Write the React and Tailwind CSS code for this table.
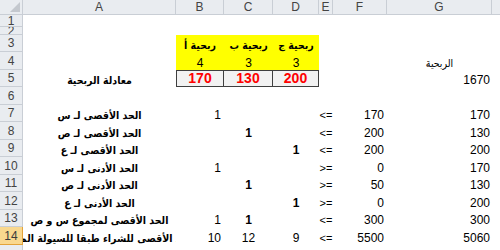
import React from "react";

const colW = ["w-[153px]", "w-[48px]", "w-[49px]", "w-[46px]", "w-[14px]", "w-[54px]", "w-[105px]"];
const letters = ["A", "B", "C", "D", "E", "F", "G"];

// one entry per sheet row: [label, B, C, D, sign, F, G]
const constraints = [
  { n: 7, h: "h-[17px]", a: "الحد الأقصى لـ س", b: "1", c: "", d: "", e: "<=", f: "170", g: "170" },
  { n: 8, h: "h-[18px]", a: "الحد الأقصى لـ ص", b: "", c: "1", d: "", e: "<=", f: "200", g: "130" },
  { n: 9, h: "h-[17px]", a: "الحد الأقصى لـ ع", b: "", c: "", d: "1", e: "<=", f: "200", g: "200" },
  { n: 10, h: "h-[18px]", a: "الحد الأدنى لـ س", b: "1", c: "", d: "", e: ">=", f: "0", g: "170" },
  { n: 11, h: "h-[17px]", a: "الحد الأدنى لـ ص", b: "", c: "1", d: "", e: ">=", f: "50", g: "130" },
  { n: 12, h: "h-[18px]", a: "الحد الأدنى لـ ع", b: "", c: "", d: "1", e: ">=", f: "0", g: "200" },
  { n: 13, h: "h-[17px]", a: "الحد الأقصى لمجموع س و ص", b: "1", c: "1", d: "", e: "<=", f: "300", g: "300" },
  { n: 14, h: "h-[18px]", a: "الحد الأقصى للشراء طبقا للسيولة المالية", b: "10", c: "12", d: "9", e: "<=", f: "5500", g: "5060", sel: true, plain: true },
];

function RowHead({ n, sel }) {
  return (
    <div
      className={`flex w-[23px] shrink-0 items-center justify-center overflow-hidden border-r border-b text-[12px] ${
        sel ? "border-[#e2a33a] bg-[#f9d88f] text-[#3b3b3b]" : "border-[#c9ced5] bg-[#e9ecf0] text-[#444]"
      }`}
    >
      {n}
    </div>
  );
}

function Cell({ i, className = "", children }) {
  return <div className={`flex shrink-0 items-end overflow-hidden leading-none ${colW[i]} ${className}`}>{children}</div>;
}

function Arabic({ children, bold = true }) {
  return (
    <span
      dir="rtl"
      className={`whitespace-nowrap pb-[2px] text-[10.5px] [font-family:'DejaVu_Sans_Condensed','DejaVu_Sans',sans-serif] [font-stretch:condensed] ${
        bold ? "font-bold" : ""
      }`}
    >
      {children}
    </span>
  );
}

export default function App() {
  return (
    <div className="h-[250px] w-[500px] overflow-hidden bg-white text-[12px] text-black [font-family:'Liberation_Sans','DejaVu_Sans',sans-serif]">
      {/* column letters */}
      <div className="flex h-[15px]">
        <div className="relative w-[23px] shrink-0 border-r border-b border-[#c9ced5] bg-[#e9ecf0]">
          <svg className="absolute right-[2px] bottom-[2px]" width="10" height="10" viewBox="0 0 10 10">
            <path d="M10 0 L10 10 L0 10 Z" fill="#c4c8ce" />
          </svg>
        </div>
        {letters.map((l, i) => (
          <div
            key={l}
            className={`flex shrink-0 items-center justify-center border-r border-b border-[#c9ced5] bg-[#e9ecf0] text-[12px] text-[#444] ${colW[i]}`}
          >
            {l}
          </div>
        ))}
        <div className="flex-1 border-b border-[#c9ced5] bg-[#e9ecf0]" />
      </div>

      <div className="flex h-[12px]">
        <RowHead n={1} />
      </div>
      <div className="flex h-[8px]">
        <RowHead n={2} />
      </div>

      {/* row 3: product names */}
      <div className="flex h-[17px]">
        <RowHead n={3} />
        <Cell i={0} />
        {["ربحية أ", "ربحية ب", "ربحية ج"].map((t, k) => (
          <Cell key={t} i={k + 1} className="justify-center bg-[#ffff00]">
            <Arabic>{t}</Arabic>
          </Cell>
        ))}
      </div>

      {/* row 4: unit profit */}
      <div className="flex h-[18px]">
        <RowHead n={4} />
        <Cell i={0} />
        {["4", "3", "3"].map((t, k) => (
          <Cell key={k} i={k + 1} className="justify-center bg-[#ffff00] pb-[1px]">
            {t}
          </Cell>
        ))}
        <Cell i={4} />
        <Cell i={5} />
        <Cell i={6} className="justify-center">
          <Arabic bold={false}>الربحية</Arabic>
        </Cell>
      </div>

      {/* row 5: objective */}
      <div className="flex h-[17px]">
        <RowHead n={5} />
        <Cell i={0} className="justify-center">
          <Arabic>معادلة الربحية</Arabic>
        </Cell>
        {["170", "130", "200"].map((t, k) => (
          <Cell
            key={t}
            i={k + 1}
            className={`justify-center border-y border-r border-[#3f3f3f] bg-[#f2f2f2] pb-[1px] text-[14px] font-bold text-[#ff0000] ${k === 0 ? "border-l" : ""}`}
          >
            {t}
          </Cell>
        ))}
        <Cell i={4} />
        <Cell i={5} />
        <Cell i={6} className="justify-end pr-[2px] pb-[1px]">
          1670
        </Cell>
      </div>

      <div className="flex h-[18px]">
        <RowHead n={6} />
      </div>

      {constraints.map((r) => (
        <div key={r.n} className={`flex ${r.h}`}>
          <RowHead n={r.n} sel={r.sel} />
          <Cell i={0} className="justify-center">
            <Arabic>{r.a}</Arabic>
          </Cell>
          <Cell i={1} className="justify-end pr-[3px] pb-[1px]">
            {r.b}
          </Cell>
          <Cell i={2} className={`justify-center pb-[1px] ${r.plain ? "" : "font-bold"}`}>
            {r.c}
          </Cell>
          <Cell i={3} className={`justify-center pb-[1px] ${r.plain ? "" : "font-bold"}`}>
            {r.d}
          </Cell>
          <Cell i={4} className="justify-center overflow-visible pb-[1px] text-[11px]">
            <span className="whitespace-nowrap">{r.e}</span>
          </Cell>
          <Cell i={5} className="justify-end pr-[3px] pb-[1px]">
            {r.f}
          </Cell>
          <Cell i={6} className="justify-end pr-[2px] pb-[1px]">
            {r.g}
          </Cell>
        </div>
      ))}

      {/* row 15 is only a sliver, its number falls below the window */}
      <div className="flex h-[10px]">
        <RowHead n="" />
      </div>
    </div>
  );
}
